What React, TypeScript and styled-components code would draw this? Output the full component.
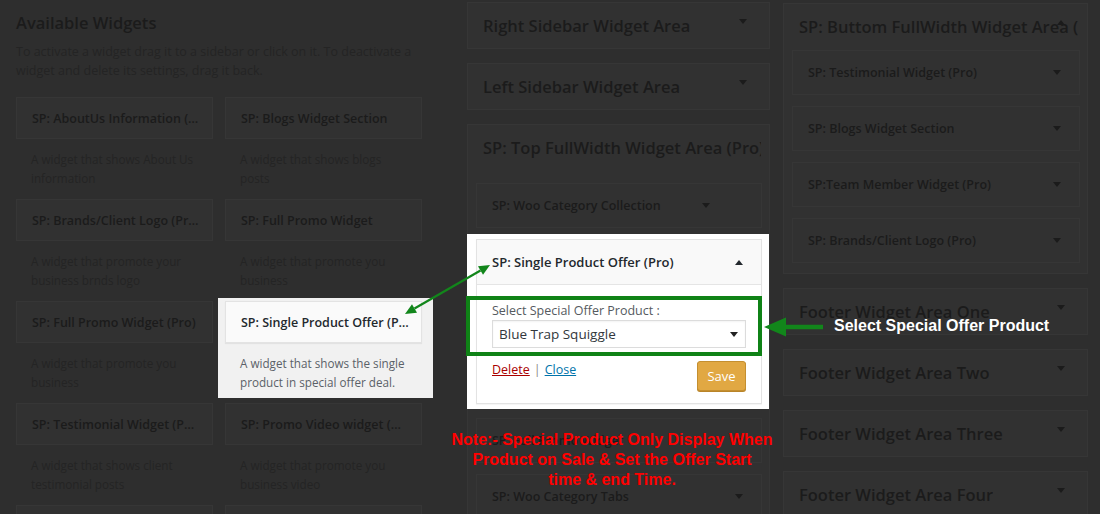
import styled, { createGlobalStyle, css } from "styled-components";

const GlobalStyle = createGlobalStyle`
	html, body {
		margin: 0;
		padding: 0;
		background: #2e2e2e;
	}
	body {
		font-family: "Open Sans", "Noto Sans", sans-serif;
	}
	* {
		box-sizing: border-box;
	}
`;

// colours of the page under the dark overlay
const dim = {
	bg: "#2e2e2e",
	card: "#313131",
	border: "#363636",
	text: "#1b1b1b",
	desc: "#242424",
};

const Screen = styled.div`
	position: relative;
	width: 1100px;
	height: 514px;
	overflow: hidden;
	background: ${dim.bg};
	display: flex;
	align-items: flex-start;
	padding-left: 16px;
`;

/* ---------- available widgets ---------- */

const LeftColumn = styled.section`
	width: 406px;
	flex-shrink: 0;
	padding-top: 11px;
`;
const Heading = styled.h2`
	margin: 0;
	font-size: 16.5px;
	font-weight: 600;
	line-height: 24px;
	color: ${dim.text};
`;
const Intro = styled.p`
	margin: 7px 0 0;
	font-size: 12.5px;
	line-height: 19px;
	color: ${dim.desc};
	white-space: nowrap;
`;
const WidgetGrid = styled.div`
	display: grid;
	grid-template-columns: 197px 197px;
	column-gap: 12px;
	grid-auto-rows: 102px;
	margin-top: 17px;
`;
const WidgetCell = styled.div<{ $lit?: boolean }>`
	${(p) =>
		p.$lit &&
		css`
			position: relative;
			z-index: 2;
			align-self: start;
			height: 100px;
			margin: -3px -11px 0 -7px;
			padding: 3px 11px 0 7px;
			background: #f1f1f1;
		`}
`;
const WidgetCard = styled.div<{ $lit?: boolean }>`
	height: 42px;
	display: flex;
	align-items: center;
	padding: 0 ${(p) => (p.$lit ? 11 : 13)}px 0 15px;
	background: ${(p) => (p.$lit ? "#fafafa" : dim.card)};
	border: 1px solid ${(p) => (p.$lit ? "#e3e3e3" : dim.border)};
	box-shadow: ${(p) => (p.$lit ? "0 1px 1px rgba(0,0,0,0.06)" : "none")};
`;
const WidgetName = styled.span<{ $lit?: boolean }>`
	font-size: 12.5px;
	font-weight: 600;
	color: ${(p) => (p.$lit ? "#23282d" : dim.text)};
	white-space: nowrap;
	overflow: hidden;
	text-overflow: ellipsis;
`;
const WidgetDesc = styled.p<{ $lit?: boolean }>`
	margin: 0;
	padding: 11px 15px 0;
	font-size: 11.7px;
	line-height: 19px;
	color: ${(p) => (p.$lit ? "#5b6168" : dim.desc)};
	white-space: nowrap;
`;

/* ---------- sidebars ---------- */

const SidebarColumn = styled.section<{ $offset: number; $width: number; $top: number }>`
	flex-shrink: 0;
	width: ${(p) => p.$width}px;
	margin-left: ${(p) => p.$offset}px;
	padding-top: ${(p) => p.$top}px;
	display: flex;
	flex-direction: column;
	gap: 14px;
`;
const SidebarBox = styled.div`
	background: ${dim.card};
	border: 1px solid ${dim.border};
`;
const SidebarHeader = styled.div`
	position: relative;
	height: 45px;
	display: flex;
	align-items: center;
	padding: 0 8px 0 15px;
	overflow: hidden;
`;
const SidebarTitle = styled.h3`
	margin: 0;
	font-size: 16.5px;
	font-weight: 600;
	color: ${dim.text};
	white-space: nowrap;
	overflow: hidden;
`;
const SidebarBody = styled.div<{ $top: number }>`
	padding: ${(p) => p.$top}px 7px 10px 8px;
	display: flex;
	flex-direction: column;
	gap: 11px;
`;

const Caret = styled.span<{ $up?: boolean; $color: string }>`
	display: block;
	flex-shrink: 0;
	width: 0;
	height: 0;
	border-left: 4px solid transparent;
	border-right: 4px solid transparent;
	${(p) =>
		p.$up
			? css`border-bottom: 5px solid ${p.$color};`
			: css`border-top: 5px solid ${p.$color};`}
`;
const HeaderCaret = styled(Caret)`
	position: absolute;
	top: 16px;
	right: 22px;
`;

const InnerWidget = styled.div`
	height: 45px;
	display: flex;
	align-items: center;
	justify-content: space-between;
	padding: 0 18px 0 15px;
	background: ${dim.card};
	border: 1px solid ${dim.border};
`;
const InnerName = styled.span`
	font-size: 12.5px;
	font-weight: 600;
	color: ${dim.text};
	white-space: nowrap;
`;
const InnerCaret = styled(Caret)<{ $shift?: number }>`
	margin-right: ${(p) => p.$shift ?? 0}px;
`;

/* ---------- the opened widget (highlighted) ---------- */

const LitArea = styled.div`
	position: relative;
	z-index: 2;
	margin: -5px -7px -2px -9px;
	padding: 5px 7px 5px 9px;
	background: #ffffff;
`;
const OpenWidget = styled.div`
	background: #ffffff;
	border: 1px solid #e3e3e3;
	box-shadow: 0 1px 1px rgba(0, 0, 0, 0.04);
`;
const OpenHeader = styled.div`
	height: 45px;
	display: flex;
	align-items: center;
	justify-content: space-between;
	padding: 0 18px 0 15px;
	background: #f9f9f9;
	border-bottom: 1px solid #e5e5e5;
`;
const OpenName = styled.span`
	font-size: 13px;
	font-weight: 600;
	color: #23282d;
`;
const OpenBody = styled.div`
	padding: 11px 15px 12px;
`;
const Highlight = styled.div`
	margin: 0 -16px 0 -26px;
	padding: 2px 12px 4px 22px;
	border: 4px solid #0f8216;
`;
const FieldLabel = styled.label`
	display: block;
	font-size: 12.5px;
	line-height: 18px;
	color: #555a60;
`;
const SelectBox = styled.div`
	height: 28px;
	display: flex;
	align-items: center;
	justify-content: space-between;
	padding: 0 7px 0 6px;
	border: 1px solid #dcdcdc;
	box-shadow: inset 0 1px 2px rgba(0, 0, 0, 0.05);
	font-size: 13.5px;
	color: #32373c;
`;
const Actions = styled.div`
	margin-top: 5px;
	display: flex;
	justify-content: space-between;
	align-items: flex-start;
`;
const LinkRow = styled.div`
	font-size: 12.5px;
	line-height: 18px;
	color: #8a8a8a;
`;
const Separator = styled.span`
	margin: 0 4px;
`;
const ActionLink = styled.a<{ $color: string }>`
	color: ${(p) => p.$color};
	text-decoration: underline;
`;
const SaveButton = styled.button`
	width: 49px;
	height: 30px;
	padding: 0;
	border: 1px solid #c48f30;
	border-radius: 3px;
	background: #e1a843;
	box-shadow: 0 1px 0 #b98428;
	font-family: inherit;
	font-size: 13px;
	color: #ffffff;
`;

/* ---------- annotations ---------- */

const Drawing = styled.svg`
	position: absolute;
	left: 0;
	top: 0;
	z-index: 3;
	pointer-events: none;
`;
const Note = styled.p`
	position: absolute;
	left: 442px;
	top: 430px;
	width: 340px;
	margin: 0;
	z-index: 3;
	font-family: "Liberation Sans", Arial, sans-serif;
	font-weight: 700;
	font-size: 16px;
	line-height: 20px;
	text-align: center;
	color: #ff0000;
`;
const Callout = styled.span`
	position: absolute;
	left: 834px;
	top: 316px;
	z-index: 3;
	font-family: "Liberation Sans", Arial, sans-serif;
	font-weight: 700;
	font-size: 16px;
	line-height: 20px;
	color: #ffffff;
	white-space: nowrap;
`;

/* ---------- data ---------- */

interface IAvailable {
	title: string;
	desc: [string, string];
	lit?: boolean;
}

const available: IAvailable[] = [
	{ title: "SP: AboutUs Information (Pro)", desc: ["A widget that shows About Us", "information"] },
	{ title: "SP: Blogs Widget Section", desc: ["A widget that shows blogs", "posts"] },
	{ title: "SP: Brands/Client Logo (Pro)", desc: ["A widget that promote your", "business brnds logo"] },
	{ title: "SP: Full Promo Widget", desc: ["A widget that promote you", "business"] },
	{ title: "SP: Full Promo Widget (Pro)", desc: ["A widget that promote you", "business"] },
	{
		title: "SP: Single Product Offer (Pro)",
		desc: ["A widget that shows the single", "product in special offer deal."],
		lit: true,
	},
	{ title: "SP: Testimonial Widget (Pro)", desc: ["A widget that shows client", "testimonial posts"] },
	{ title: "SP: Promo Video widget (Pro)", desc: ["A widget that promote you", "business video"] },
	{ title: "SP:Team Member Widget (Pro)", desc: ["A widget that shows team", "members"] },
	{ title: "SP: Woo Category Collection", desc: ["A widget that shows product", "categories"] },
];

const bottomWidgets = [
	"SP: Testimonial Widget (Pro)",
	"SP: Blogs Widget Section",
	"SP:Team Member Widget (Pro)",
	"SP: Brands/Client Logo (Pro)",
];

const footerAreas = ["Footer Widget Area One", "Footer Widget Area Two", "Footer Widget Area Three", "Footer Widget Area Four"];

function Sidebar({
	title,
	open,
	caret = true,
	bodyTop = 0,
	children,
}: {
	title: string;
	open?: boolean;
	caret?: boolean;
	bodyTop?: number;
	children?: React.ReactNode;
}) {
	return (
		<SidebarBox>
			<SidebarHeader>
				<SidebarTitle>{title}</SidebarTitle>
				{caret && <HeaderCaret $up={open} $color={dim.text} />}
			</SidebarHeader>
			{open && <SidebarBody $top={bodyTop}>{children}</SidebarBody>}
		</SidebarBox>
	);
}

function App() {
	return (
		<>
			<GlobalStyle />
			<Screen>
				<LeftColumn>
					<Heading>Available Widgets</Heading>
					<Intro>
						To activate a widget drag it to a sidebar or click on it. To deactivate a
						<br />
						widget and delete its settings, drag it back.
					</Intro>
					<WidgetGrid>
						{available.map((w) => (
							<WidgetCell key={w.title} $lit={w.lit}>
								<WidgetCard $lit={w.lit}>
									<WidgetName $lit={w.lit}>{w.title}</WidgetName>
								</WidgetCard>
								<WidgetDesc $lit={w.lit}>
									{w.desc[0]}
									<br />
									{w.desc[1]}
								</WidgetDesc>
							</WidgetCell>
						))}
					</WidgetGrid>
				</LeftColumn>

				<SidebarColumn $offset={45} $width={303} $top={2}>
					<Sidebar title="Right Sidebar Widget Area" />
					<Sidebar title="Left Sidebar Widget Area" />
					<Sidebar title="SP: Top FullWidth Widget Area (Pro)" open caret={false} bodyTop={13}>
						<InnerWidget>
							<InnerName>SP: Woo Category Collection</InnerName>
							<InnerCaret $color={dim.text} $shift={33} />
						</InnerWidget>
						<LitArea>
							<OpenWidget>
								<OpenHeader>
									<OpenName>SP: Single Product Offer (Pro)</OpenName>
									<Caret $up $color="#23282d" />
								</OpenHeader>
								<OpenBody>
									<Highlight>
										<FieldLabel>Select Special Offer Product :</FieldLabel>
										<SelectBox>
											Blue Trap Squiggle
											<Caret $color="#222" />
										</SelectBox>
									</Highlight>
									<Actions>
										<LinkRow>
											<ActionLink $color="#a00">Delete</ActionLink>
											<Separator>|</Separator>
											<ActionLink $color="#0073aa">Close</ActionLink>
										</LinkRow>
										<SaveButton>Save</SaveButton>
									</Actions>
								</OpenBody>
							</OpenWidget>
						</LitArea>
						<InnerWidget>
							<InnerName>SP: Full Promo Widget</InnerName>
							<InnerCaret $color={dim.text} />
						</InnerWidget>
						<InnerWidget>
							<InnerName>SP: Woo Category Tabs</InnerName>
							<InnerCaret $color={dim.text} />
						</InnerWidget>
					</Sidebar>
				</SidebarColumn>

				<SidebarColumn $offset={13} $width={305} $top={3}>
					<Sidebar title="SP: Buttom FullWidth Widget Area (Pro)" open bodyTop={1}>
						{bottomWidgets.map((name) => (
							<InnerWidget key={name}>
								<InnerName>{name}</InnerName>
								<InnerCaret $color={dim.text} />
							</InnerWidget>
						))}
					</Sidebar>
					{footerAreas.map((name) => (
						<Sidebar key={name} title={name} />
					))}
				</SidebarColumn>

				<Drawing width="1100" height="514" viewBox="0 0 1100 514">
					<g fill="#12861b" stroke="none">
						<line x1="414.5" y1="308.5" x2="480.5" y2="270.5" stroke="#12861b" strokeWidth="2.2" />
						<polygon points="490,265 483,274.8 478,266.2" />
						<polygon points="405,314 417,312.8 412,304.2" />
						<line x1="784" y1="327" x2="823" y2="327" stroke="#12861b" strokeWidth="4.5" />
						<polygon points="764,327 786,317.5 786,336.5" />
					</g>
				</Drawing>
				<Note>
					Note:- Special Product Only Display When
					<br />
					Product on Sale &amp; Set the Offer Start
					<br />
					time &amp; end Time.
				</Note>
				<Callout>Select Special Offer Product</Callout>
			</Screen>
		</>
	);
}

export default App;
